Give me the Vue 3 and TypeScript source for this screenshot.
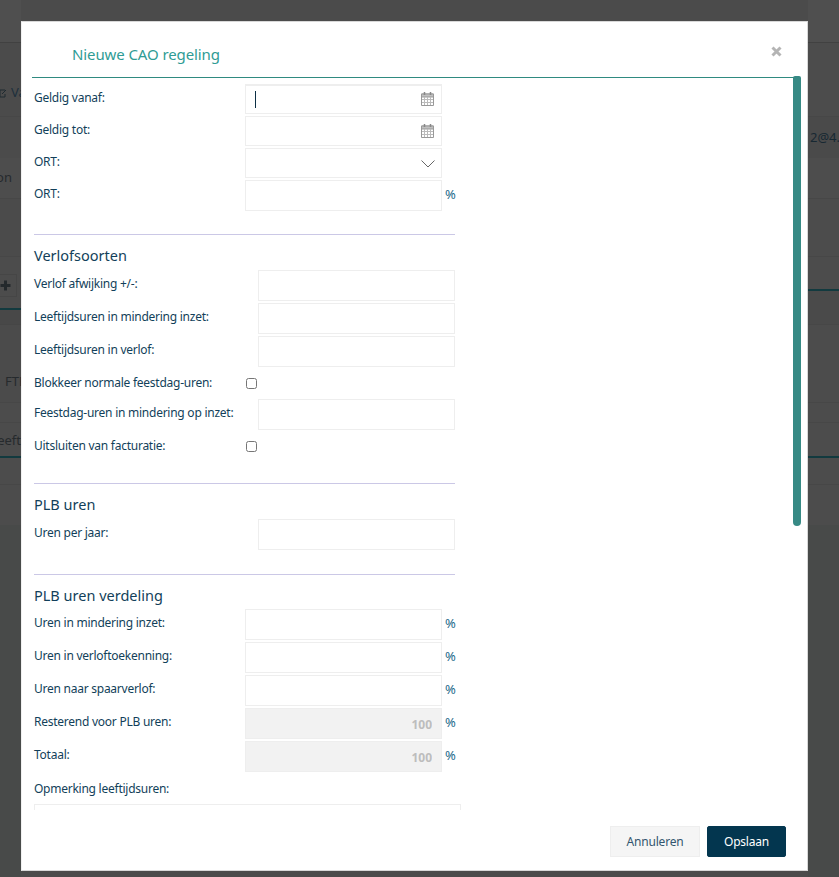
<script setup lang="ts">
interface Band { h: number; line?: string; bg?: string; text?: string; cls?: string }

const leftBands: Band[] = [
  { h: 43, bg: '#4f4f4f', line: '#414141' },
  { h: 74, bg: '#4b4b4b', line: '#474747', text: 'Va', cls: 'va' },
  { h: 41, bg: '#4b4b4b' },
  { h: 41, bg: '#4d4d4d', line: '#474747', text: 'on', cls: 'on' },
  { h: 58, bg: '#4b4b4b', line: '#474747' },
  { h: 53, bg: '#4c4c4c', line: '#123a3f', cls: 'plus thick' },
  { h: 15, bg: '#484848', line: '#464646' },
  { h: 78, bg: '#4b4b4b', line: '#474747', text: 'FTE', cls: 'fte' },
  { h: 20, bg: '#4c4c4c', line: '#474747' },
  { h: 35, bg: '#4c4c4c', line: '#123a3f', text: 'leeft', cls: 'leeft thick' },
  { h: 27, bg: '#4c4c4c', line: '#474747' },
  { h: 40, bg: '#4c4c4c' },
  { h: 352, bg: '#484a49' }
]

const rightBands: Band[] = [
  { h: 43, bg: '#4f4f4f', line: '#414141' },
  { h: 74, bg: '#4c4c4c', line: '#474747' },
  { h: 41, bg: '#4a4a4a', text: '2@4.nl', cls: 'mail' },
  { h: 41, bg: '#4d4d4d', line: '#474747' },
  { h: 58, bg: '#4c4c4c', line: '#474747' },
  { h: 34, bg: '#4c4c4c', line: '#123a3f', cls: 'thick' },
  { h: 34, bg: '#4a4a4a', line: '#474747' },
  { h: 78, bg: '#4c4c4c', line: '#474747' },
  { h: 20, bg: '#4c4c4c', line: '#474747' },
  { h: 35, bg: '#4c4c4c', line: '#123a3f', cls: 'thick' },
  { h: 27, bg: '#4c4c4c', line: '#474747' },
  { h: 40, bg: '#4c4c4c' },
  { h: 352, bg: '#484a49' }
]

function bandStyle(b: Band) {
  return {
    height: b.h + 'px',
    background: b.bg,
    borderBottomColor: b.line || 'transparent'
  }
}

const verdeling = ['Uren in mindering inzet:', 'Uren in verloftoekenning:', 'Uren naar spaarverlof:']
</script>

<template>
  <div class="screen">
    <div class="underlay">
      <div class="side left">
        <div v-for="(b, i) in leftBands" :key="i" class="band" :class="b.cls" :style="bandStyle(b)">
          <svg v-if="b.cls === 'va'" class="edit" width="8" height="10" viewBox="0 0 8 10" aria-hidden="true">
            <path d="M6 2H1v7h5V6M3 6l4-4" fill="none" stroke="#1e2a30" stroke-width="1" />
          </svg>
          <span v-if="b.text">{{ b.text }}</span>
          <span v-if="b.cls === 'plus thick'" class="plusbox">
            <svg width="11" height="11" viewBox="0 0 11 11" aria-hidden="true">
              <path d="M5.5 0.5v10M0.5 5.5h10" stroke="#24292c" stroke-width="3" />
            </svg>
          </span>
        </div>
      </div>
      <div class="side right">
        <div v-for="(b, i) in rightBands" :key="i" class="band" :class="b.cls" :style="bandStyle(b)">
          <span v-if="b.text">{{ b.text }}</span>
        </div>
      </div>
    </div>

    <div class="modal">
      <header class="head">
        <h2 class="title">Nieuwe CAO regeling</h2>
        <button class="close" type="button" aria-label="Sluiten">
          <svg width="11" height="11" viewBox="0 0 11 11" aria-hidden="true">
            <path d="M1.500 1.500l8 8M9.500 1.500l-8 8" stroke="#b4b4b4" stroke-width="3" />
          </svg>
        </button>
      </header>

      <div class="body">
        <div class="form">
          <section>
            <div class="row short">
              <label>Geldig vanaf:</label>
              <div class="control first">
                <input type="text" />
                <span class="caret"></span>
                <svg class="cal" width="14" height="15" viewBox="0 0 14 15" aria-hidden="true">
                  <path d="M0.5 3h12v11.500H0.5z" fill="#fff" stroke="#999" />
                  <path d="M0.5 3h12v3H0.5z" fill="#c0c0c0" stroke="#999" />
                  <path d="M3.500 6v8M6.500 6v8M9.500 6v8M1 8.500h11M1 11.500h11" stroke="#bbb" fill="none" />
                  <path d="M3.500 1v3M9.500 1v3" stroke="#888" stroke-width="1.500" fill="none" />
                </svg>
              </div>
            </div>
            <div class="row short">
              <label>Geldig tot:</label>
              <div class="control">
                <input type="text" />
                <svg class="cal" width="14" height="15" viewBox="0 0 14 15" aria-hidden="true">
                  <path d="M0.5 3h12v11.500H0.5z" fill="#fff" stroke="#999" />
                  <path d="M0.5 3h12v3H0.5z" fill="#c0c0c0" stroke="#999" />
                  <path d="M3.500 6v8M6.500 6v8M9.500 6v8M1 8.500h11M1 11.500h11" stroke="#bbb" fill="none" />
                  <path d="M3.500 1v3M9.500 1v3" stroke="#888" stroke-width="1.500" fill="none" />
                </svg>
              </div>
            </div>
            <div class="row short">
              <label>ORT:</label>
              <div class="control">
                <input type="text" />
                <svg class="chev" width="14" height="8" viewBox="0 0 14 8" aria-hidden="true">
                  <path d="M0.500 0.500l6.500 6.500 6.500-6.500" fill="none" stroke="#666" stroke-width="1" />
                </svg>
              </div>
            </div>
            <div class="row short tall">
              <label>ORT:</label>
              <div class="control"><input type="text" /></div>
              <span class="pct">%</span>
            </div>
          </section>

          <hr class="rule r1" />
          <h3 class="sub">Verlofsoorten</h3>
          <section>
            <div class="row wide"><label>Verlof afwijking +/-:</label><div class="control"><input type="text" /></div></div>
            <div class="row wide"><label>Leeftijdsuren in mindering inzet:</label><div class="control"><input type="text" /></div></div>
            <div class="row wide"><label>Leeftijdsuren in verlof:</label><div class="control"><input type="text" /></div></div>
            <div class="row check"><label>Blokkeer normale feestdag-uren:</label><input type="checkbox" /></div>
            <div class="row wide"><label>Feestdag-uren in mindering op inzet:</label><div class="control"><input type="text" /></div></div>
            <div class="row check"><label>Uitsluiten van facturatie:</label><input type="checkbox" /></div>
          </section>

          <hr class="rule r2" />
          <h3 class="sub">PLB uren</h3>
          <section>
            <div class="row wide"><label>Uren per jaar:</label><div class="control"><input type="text" /></div></div>
          </section>

          <hr class="rule r3" />
          <h3 class="sub s3">PLB uren verdeling</h3>
          <section>
            <div v-for="l in verdeling" :key="l" class="row pctrow">
              <label>{{ l }}</label>
              <div class="control"><input type="text" /></div>
              <span class="pct">%</span>
            </div>
            <div class="row pctrow">
              <label>Resterend voor PLB uren:</label>
              <div class="control"><input type="text" value="100" disabled /></div>
              <span class="pct">%</span>
            </div>
            <div class="row pctrow">
              <label>Totaal:</label>
              <div class="control"><input type="text" value="100" disabled /></div>
              <span class="pct">%</span>
            </div>
          </section>
          <label class="note-label">Opmerking leeftijdsuren:</label>
          <textarea class="note"></textarea>
        </div>
      </div>
      <div class="thumb"></div>

      <footer class="foot">
        <button class="btn ghost" type="button">Annuleren</button>
        <button class="btn primary" type="button">Opslaan</button>
      </footer>
    </div>
  </div>
</template>

<style>
html, body { margin: 0; padding: 0; overflow: hidden; }
</style>

<style scoped>
.screen {
  position: relative;
  width: 839px;
  height: 877px;
  overflow: hidden;
  font-family: "Noto Sans", "Open Sans", sans-serif;
  font-size: 12px;
  letter-spacing: -0.25px;
  color: #123f5a;
  background: #4b4b4b;
}
.underlay {
  display: flex;
  justify-content: space-between;
  height: 877px;
}
.side { overflow: hidden; height: 877px; }
.side.left { width: 21px; }
.side.right { width: 31px; }
.band {
  box-sizing: border-box;
  display: flex;
  align-items: center;
  border-bottom: 1px solid transparent;
  color: #20292e;
  font-size: 13px;
  letter-spacing: 0;
  white-space: nowrap;
  overflow: hidden;
}
.band.thick { border-bottom-width: 2px; }
.va { align-items: flex-end; padding-bottom: 15px; gap: 4px; color: #1d2f3c; }
.edit { flex: none; margin-left: -1px; margin-bottom: 3px; }
.on { justify-content: flex-end; padding-right: 9px; padding-bottom: 2px; color: #262a2d; }
.plusbox {
  box-sizing: border-box;
  width: 17px;
  height: 23px;
  margin-top: 5px;
  display: flex;
  align-items: center;
  border: 1px solid #464646;
  border-left: 0;
}
.fte { align-items: flex-end; padding-left: 5px; padding-bottom: 12px; color: #262a2d; }
.leeft { justify-content: flex-end; color: #262a2d; }
.mail { padding-left: 2px; color: #172832; }

.modal {
  position: absolute;
  left: 21px;
  top: 21px;
  box-sizing: border-box;
  width: 787px;
  height: 850px;
  display: flex;
  flex-direction: column;
  background: #fff;
  border: 1px solid #d8d8d8;
  border-left-color: #f0f0f0;
}
.head {
  flex: none;
  box-sizing: border-box;
  height: 56px;
  margin-left: 10px;
  margin-right: 13px;
  display: flex;
  align-items: flex-start;
  justify-content: space-between;
  border-bottom: 1px solid #2f8a80;
}
.title {
  margin: 20px 0 0 40px;
  font-size: 15px;
  line-height: 24px;
  font-weight: 400;
  letter-spacing: -0.1px;
  color: #2f9c95;
}
.close {
  margin: 24px 12px 0 0;
  padding: 0;
  border: 0;
  background: none;
  line-height: 0;
}
.body {
  flex: 1;
  min-height: 0;
  overflow: hidden;
  padding: 6px 0 0 12px;
}
.form { width: 427px; }
.row {
  display: flex;
  align-items: flex-start;
  height: 31px;
  margin-bottom: 2px;
}
.row label { line-height: 28px; }
.row.short label, .row.pctrow label { width: 211px; flex: none; }
.row.short { height: 30px; }
.row.short.tall { height: 31px; margin-bottom: 0; }
.row.wide label { width: 224px; flex: none; }
.row.check { height: 30px; margin-bottom: 0; }
.row.check label { width: 212px; flex: none; }
.row.check input {
  width: 11px;
  height: 11px;
  margin: 9px 0 0;
}
.row.wide .control, .row.short .control, .row.pctrow .control { width: 197px; }
.control { position: relative; height: 100%; }
.control input {
  box-sizing: border-box;
  display: block;
  width: 100%;
  height: 100%;
  padding: 1px 9px 0 10px;
  border: 1px solid #eeeeee;
  background: #fff;
  outline: 0;
  font: inherit;
  letter-spacing: 0;
}
.control.first input { border-top-width: 2px; }
.control input:disabled {
  background: #f2f2f2;
  color: #bdbdbd;
  font-weight: 700;
  text-align: right;
  padding-top: 2px;
  -webkit-text-fill-color: #bdbdbd;
  opacity: 1;
}
.caret {
  position: absolute;
  left: 10px;
  top: 7px;
  width: 1px;
  height: 17px;
  background: #0c2f45;
}
.cal { position: absolute; right: 7px; top: 7px; }
.chev { position: absolute; right: 7px; top: 12px; }
.pct {
  margin-left: 3px;
  line-height: 29px;
  color: #1c6a8a;
  font-size: 13px;
  letter-spacing: 0;
}
.rule {
  width: 421px;
  height: 1px;
  margin: 0;
  border: 0;
  background: #cbc8e6;
}
.r1 { margin-top: 23px; }
.r2 { margin-top: 21px; }
.r3 { margin-top: 24px; }
.sub {
  margin: 9px 0 3px;
  font-size: 14.500px;
  line-height: 23px;
  font-weight: 400;
  letter-spacing: 0;
  color: #123f5a;
}
.sub.s3 { margin-bottom: 2px; }
.note-label { display: block; line-height: 28px; margin-top: 3px; }
.note {
  display: block;
  box-sizing: border-box;
  width: 427px;
  height: 60px;
  margin: 1px 0 0;
  border: 1px solid #eeeeee;
  resize: none;
  outline: 0;
}
.thumb {
  position: absolute;
  left: 771px;
  top: 54px;
  width: 8px;
  height: 450px;
  background: #378a85;
  border-radius: 2px 2px 4px 4px;
}
.foot {
  flex: none;
  box-sizing: border-box;
  height: 60px;
  display: flex;
  justify-content: flex-end;
  gap: 7px;
  padding: 16px 21px 0 0;
  background: #fff;
}
.btn {
  box-sizing: border-box;
  height: 31px;
  font: inherit;
  font-size: 12px;
  letter-spacing: -0.2px;
  border-radius: 2px;
}
.ghost {
  width: 90px;
  background: #f5f5f5;
  border: 1px solid #eeeeee;
  color: #33566f;
  border-radius: 0;
}
.primary {
  width: 79px;
  background: #03364f;
  border: 1px solid #03364f;
  color: #fff;
}
</style>
